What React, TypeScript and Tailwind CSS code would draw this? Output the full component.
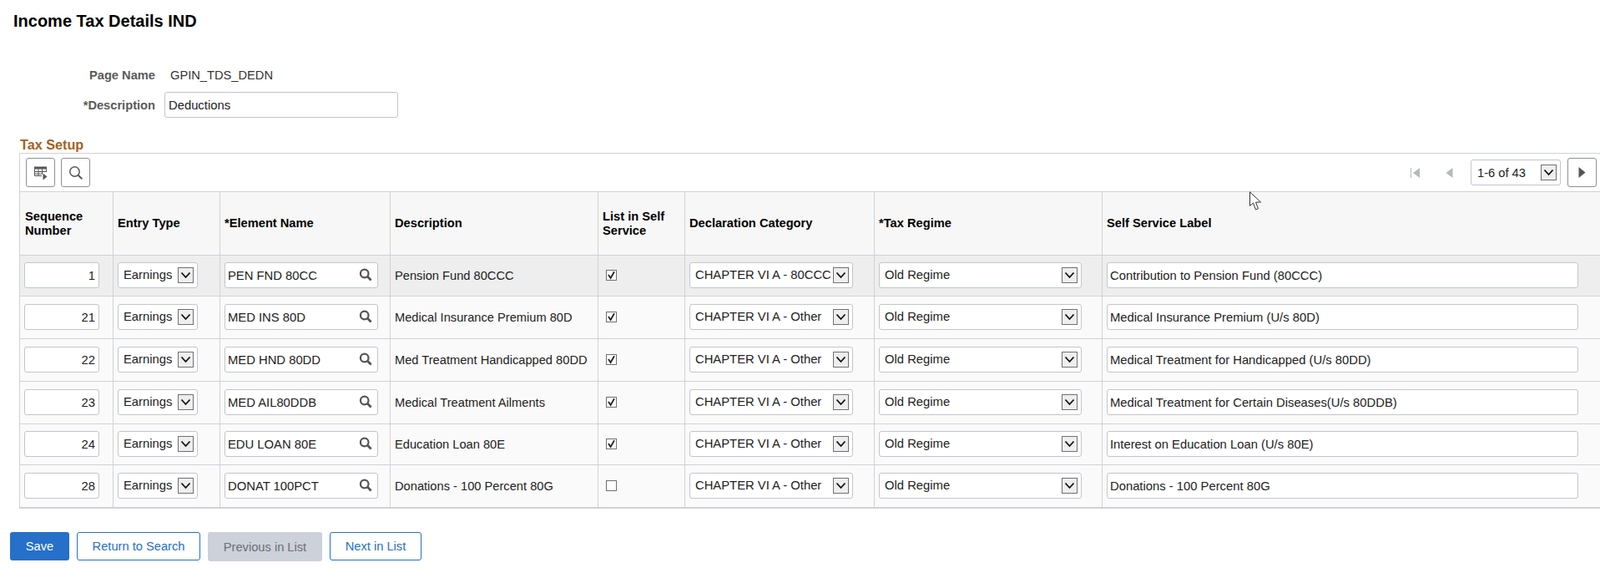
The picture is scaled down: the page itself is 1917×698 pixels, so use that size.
const gridCols = "grid grid-cols-[112px_128px_204px_249px_104px_227px_273px_1fr]";

const rows = [
  { seq: "1", element: "PEN FND 80CC", desc: "Pension Fund 80CCC", checked: true, category: "CHAPTER VI A - 80CCC", label: "Contribution to Pension Fund (80CCC)", rowClass: "h-[49px] bg-[#eeeeee]" },
  { seq: "21", element: "MED INS 80D", desc: "Medical Insurance Premium 80D", checked: true, category: "CHAPTER VI A - Other", label: "Medical Insurance Premium (U/s 80D)", rowClass: "h-[51px] bg-[#fafafa]" },
  { seq: "22", element: "MED HND 80DD", desc: "Med Treatment Handicapped 80DD", checked: true, category: "CHAPTER VI A - Other", label: "Medical Treatment for Handicapped (U/s 80DD)", rowClass: "h-[51px] bg-[#fafafa]" },
  { seq: "23", element: "MED AIL80DDB", desc: "Medical Treatment Ailments", checked: true, category: "CHAPTER VI A - Other", label: "Medical Treatment for Certain Diseases(U/s 80DDB)", rowClass: "h-[51px] bg-[#fafafa]" },
  { seq: "24", element: "EDU LOAN 80E", desc: "Education Loan 80E", checked: true, category: "CHAPTER VI A - Other", label: "Interest on Education Loan (U/s 80E)", rowClass: "h-[49px] bg-[#fafafa]" },
  { seq: "28", element: "DONAT 100PCT", desc: "Donations - 100 Percent 80G", checked: false, category: "CHAPTER VI A - Other", label: "Donations - 100 Percent 80G", rowClass: "h-[51px] bg-[#fafafa]" },
];

const headers = [
  "Sequence Number",
  "Entry Type",
  "*Element Name",
  "Description",
  "List in Self Service",
  "Declaration Category",
  "*Tax Regime",
  "Self Service Label",
];

function SelectArrow() {
  return (
    <span className="flex h-[19px] w-[19px] shrink-0 items-center justify-center border border-[#707070] bg-[#eeeeee]">
      <svg width="13" height="9" viewBox="0 0 13 9" fill="none" stroke="#111" strokeWidth="1.8">
        <path d="M1.5 1.5 L6.5 7 L11.5 1.5" />
      </svg>
    </span>
  );
}

function Select({ value, className }: { value: string; className: string }) {
  return (
    <div className={`flex h-[31px] items-center rounded-[3px] border border-[#c0c6d0] bg-white text-[14.8px] whitespace-nowrap text-[#222] ${className}`}>
      <span className="min-w-0 flex-1 overflow-hidden">{value}</span>
      <SelectArrow />
    </div>
  );
}

function TextInput({ value, className }: { value: string; className: string }) {
  return (
    <input
      readOnly
      value={value}
      className={`h-[31px] rounded-[3px] border border-[#c0c6d0] bg-white text-[14.8px] text-[#222] outline-none ${className}`}
    />
  );
}

function LookupIcon() {
  return (
    <svg width="16" height="16" viewBox="0 0 16 16" fill="none" stroke="#555" className="absolute top-[7px] right-[7px]">
      <circle cx="6.7" cy="6.5" r="4.8" strokeWidth="2.2" />
      <path d="M10.2 10 L14.6 14.4" strokeWidth="2.8" />
    </svg>
  );
}

function CheckBox({ checked }: { checked: boolean }) {
  return (
    <span className="flex h-[13px] w-[13px] items-center justify-center border border-[#707070] bg-white">
      {checked && (
        <svg width="11" height="11" viewBox="0 0 11 11" fill="none" stroke="#222" strokeWidth="1.8">
          <path d="M2 5 L4.6 9 L9 1.2" />
        </svg>
      )}
    </span>
  );
}

function IconButton({ children }: { children: React.ReactNode }) {
  return (
    <button className="flex h-[35px] w-[35px] items-center justify-center rounded-[3px] border border-[#8c9196] bg-white">
      {children}
    </button>
  );
}

function FooterButton({ label, kind }: { label: string; kind: string }) {
  return (
    <button className={`flex items-center justify-center rounded-[3px] text-[14.67px] ${kind}`}>
      {label}
    </button>
  );
}

export default function App() {
  return (
    <div className="relative h-[698px] w-[1917px] overflow-hidden bg-white font-['Liberation_Sans',Arial,sans-serif] text-[14.67px] text-[#222]">
      <h1 className="pt-[14px] pl-[16px] text-[20px] leading-[23px] font-bold text-black">Income Tax Details IND</h1>

      <div className="mt-[43px] flex h-[20px] items-center">
        <span className="w-[186px] text-right font-bold text-[#5a5a5a]">Page Name</span>
        <span className="ml-[18px] text-[#333]">GPIN_TDS_DEDN</span>
      </div>
      <div className="mt-[10px] flex items-center">
        <span className="w-[186px] text-right font-bold text-[#5a5a5a]">*Description</span>
        <TextInput value="Deductions" className="ml-[11px] w-[280px] pl-[4px]" />
      </div>

      <div className="mt-[23px] ml-[24px] h-[19px] text-[16.2px] leading-[19px] font-bold text-[#a65f22]">Tax Setup</div>

      <div className="ml-[23px] border-t border-t-[#cfd2d6]">
        <div className="flex h-[45px] items-center border-l border-l-[#cfd2d6] pr-[4px] pl-[7px]">
          <div className="flex gap-[7px]">
            <IconButton>
              <svg width="18" height="18" viewBox="0 0 18 18" fill="none">
                <path d="M1 1.5 H16 V4.5 H1 Z" fill="#555" />
                <path d="M1.5 4.5 V12.5 H10 M6 4.5 V12.5 M10.5 4.5 V10 M1.5 7.5 H16 M1.5 10.2 H11 M15.5 4.5 V8" stroke="#555" />
                <path d="M11.5 9.5 L16.5 13.5 L11.5 17.5 Z" fill="#555" />
              </svg>
            </IconButton>
            <IconButton>
              <svg width="18" height="18" viewBox="0 0 18 18" fill="none" stroke="#555">
                <circle cx="7.5" cy="7.5" r="5.7" strokeWidth="1.5" />
                <path d="M11.7 11.7 L16.4 16.4" strokeWidth="2" />
              </svg>
            </IconButton>
          </div>
          <div className="ml-auto flex items-center">
            <svg width="12" height="12" viewBox="0 0 12 12" fill="#b5b9bd">
              <path d="M0 0 H1 V12 H0 Z M11 0 V12 L3 6 Z" />
            </svg>
            <svg width="9" height="12" viewBox="0 0 9 12" fill="#b5b9bd" className="ml-[30px]">
              <path d="M8.5 0 V12 L0.5 6 Z" />
            </svg>
            <div className="ml-[21px] flex h-[31px] w-[108px] items-center justify-between rounded-[3px] border border-[#c0c6d0] pr-[4px] pl-[7px] text-[14.67px] whitespace-nowrap">
              <span>1-6 of 43</span>
              <SelectArrow />
            </div>
            <div className="ml-[8px]">
              <IconButton>
                <svg width="9" height="13" viewBox="0 0 9 13" fill="#555">
                  <path d="M0.5 0 L8.5 6.5 L0.5 13 Z" />
                </svg>
              </IconButton>
            </div>
          </div>
        </div>

        <div className={`${gridCols} h-[77px] border-y border-y-[#cfd2d6] bg-[#f7f7f7] font-bold text-black`}>
          {headers.map((header) => (
            <div key={header} className={`flex items-center border-l border-l-[#cfd2d6] pr-[5px] leading-[17px] ${header === "Sequence Number" ? "pl-[6px]" : "pl-[5px]"}`}>
              <span className={header === "Sequence Number" || header === "List in Self Service" ? "w-[95px]" : ""}>{header}</span>
            </div>
          ))}
        </div>

        {rows.map((row) => (
          <div key={row.seq} className={`${gridCols} ${row.rowClass} border-b border-b-[#cfd2d6] text-[14.67px]`}>
            <div className="flex items-center border-l border-l-[#cfd2d6] pb-px pl-[5px]">
              <TextInput value={row.seq} className="w-[90px] pr-[4px] text-right" />
            </div>
            <div className="flex items-center border-l border-l-[#cfd2d6] pb-px pl-[5px]">
              <Select value="Earnings" className="w-[96px] pr-[4px] pl-[6px]" />
            </div>
            <div className="flex items-center border-l border-l-[#cfd2d6] pb-px pl-[5px]">
              <div className="relative">
                <TextInput value={row.element} className="w-[184px] pl-[3px]" />
                <LookupIcon />
              </div>
            </div>
            <div className="flex items-center border-l border-l-[#cfd2d6] pb-px pl-[5px]">{row.desc}</div>
            <div className="flex items-center border-l border-l-[#cfd2d6] pb-px pl-[9px]">
              <CheckBox checked={row.checked} />
            </div>
            <div className="flex items-center border-l border-l-[#cfd2d6] pb-px pl-[5px]">
              <Select value={row.category} className="w-[196px] pr-[4px] pl-[6px]" />
            </div>
            <div className="flex items-center border-l border-l-[#cfd2d6] pb-px pl-[5px]">
              <Select value="Old Regime" className="w-[243px] pr-[4px] pl-[6px]" />
            </div>
            <div className="flex items-center border-l border-l-[#cfd2d6] pb-px pl-[5px]">
              <TextInput value={row.label} className="w-[565px] pl-[3px]" />
            </div>
          </div>
        ))}
        <div className="h-px w-full bg-[#cfd2d6]" />
      </div>

      <div className="mt-[28px] ml-[12px] flex h-[34px] gap-[9px]">
        <FooterButton label="Save" kind="w-[71px] bg-[#2670c9] text-white" />
        <FooterButton label="Return to Search" kind="w-[148px] border border-[#2670c9] bg-white text-[#2670c9]" />
        <FooterButton label="Previous in List" kind="h-[35px] w-[137px] bg-[#cdd1d9] text-[#6b6f76]" />
        <FooterButton label="Next in List" kind="w-[110px] border border-[#2670c9] bg-white text-[#2670c9]" />
      </div>

      {/* mouse pointer caught in the screenshot */}
      <svg width="17" height="25" viewBox="0 0 17 25" className="absolute top-[229px] left-[1496px]" fill="white" stroke="#333" strokeWidth="1">
        <path d="M1.5 0.8 V17.5 L5.5 14 L8.5 22 L11.5 20.8 L8.5 13.2 L14.5 13 Z" />
      </svg>
    </div>
  );
}
